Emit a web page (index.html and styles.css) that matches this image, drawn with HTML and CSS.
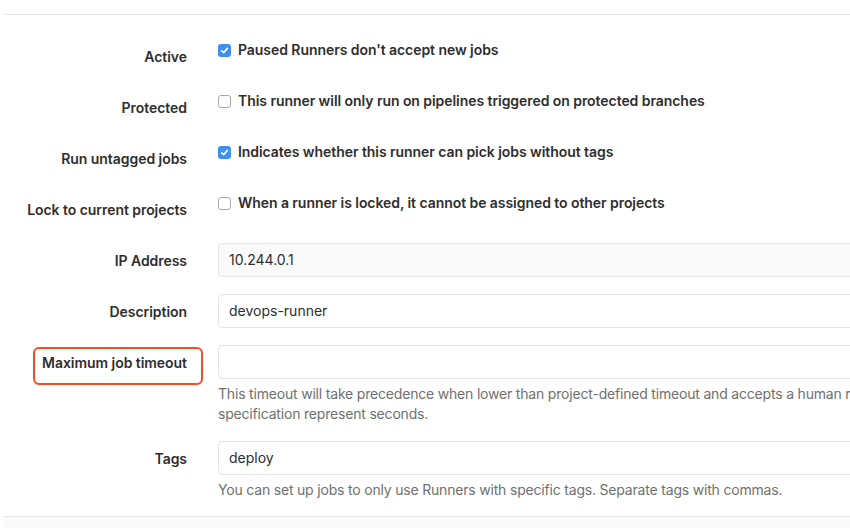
FILE: index.html
```html
<!DOCTYPE html>
<html>
<head>
<meta charset="utf-8">
<link rel="stylesheet" href="styles.css">
</head>
<body>
<div class="page">
  <hr class="divider">
  <form class="runner-form">
    <div class="form-row">
      <label class="row-label">Active</label>
      <div class="control check-control">
        <span class="checkbox checked"><svg viewBox="0 0 13 13" width="13" height="13"><path d="M3.6 6.8 L5.6 8.7 L9.4 4.4" fill="none" stroke="#fff" stroke-width="1.6" stroke-linecap="round" stroke-linejoin="round"/></svg></span>
        <span class="check-text">Paused Runners don't accept new jobs</span>
      </div>
    </div>
    <div class="form-row">
      <label class="row-label">Protected</label>
      <div class="control check-control">
        <span class="checkbox"></span>
        <span class="check-text">This runner will only run on pipelines triggered on protected branches</span>
      </div>
    </div>
    <div class="form-row">
      <label class="row-label">Run untagged jobs</label>
      <div class="control check-control">
        <span class="checkbox checked"><svg viewBox="0 0 13 13" width="13" height="13"><path d="M3.6 6.8 L5.6 8.7 L9.4 4.4" fill="none" stroke="#fff" stroke-width="1.6" stroke-linecap="round" stroke-linejoin="round"/></svg></span>
        <span class="check-text">Indicates whether this runner can pick jobs without tags</span>
      </div>
    </div>
    <div class="form-row">
      <label class="row-label">Lock to current projects</label>
      <div class="control check-control">
        <span class="checkbox"></span>
        <span class="check-text">When a runner is locked, it cannot be assigned to other projects</span>
      </div>
    </div>
    <div class="form-row">
      <label class="row-label">IP Address</label>
      <div class="control">
        <div class="text-input readonly">10.244.0.1</div>
      </div>
    </div>
    <div class="form-row">
      <label class="row-label">Description</label>
      <div class="control">
        <div class="text-input">devops-runner</div>
      </div>
    </div>
    <div class="form-row">
      <label class="row-label highlighted">Maximum job timeout<span class="annotation"></span></label>
      <div class="control">
        <div class="text-input"></div>
        <p class="help">This timeout will take precedence when lower than project-defined timeout and accepts a human readable time input language like "1 hour". Values without<br>specification represent seconds.</p>
      </div>
    </div>
    <div class="form-row">
      <label class="row-label">Tags</label>
      <div class="control">
        <div class="text-input">deploy</div>
        <p class="help">You can set up jobs to only use Runners with specific tags. Separate tags with commas.</p>
      </div>
    </div>
  </form>
  <div class="form-actions"></div>
</div>
</body>
</html>
```
FILE: styles.css
```css
html, body {
  margin: 0;
  padding: 0;
  background: #fff;
  overflow: hidden;
}
body {
  font-family: Inter, "Noto Sans", "Liberation Sans", sans-serif;
  font-size: 14px;
  color: #2e2e2e;
}
.page {
  width: 1300px;
  height: 528px;
  display: flex;
  flex-direction: column;
}
.divider {
  margin: 14px 0 0 5px;
  border: 0;
  border-top: 1px solid #e5e5e5;
  height: 0;
}
.runner-form {
  margin-top: 24px;
  display: flex;
  flex-direction: column;
}
.form-row {
  display: grid;
  grid-template-columns: 187px 1fr;
  column-gap: 31px;
  min-height: 34px;
  margin-bottom: 17px;
}
.form-row:last-child {
  margin-bottom: 16px;
}
.row-label {
  text-align: right;
  font-weight: 600;
  line-height: 20px;
  padding-top: 8px;
  position: relative;
  white-space: nowrap;
  letter-spacing: -0.05px;
}
.annotation {
  position: absolute;
  left: 33px;
  top: 2px;
  width: 166px;
  height: 34px;
  border: 2px solid #fc4a26;
  border-radius: 6px;
}
.control {
  width: 1000px;
}
.check-control {
  display: flex;
  align-items: flex-start;
  padding-top: 1px;
}
.checkbox {
  width: 13px;
  height: 13px;
  box-sizing: border-box;
  border: 1px solid #a8a8a8;
  border-radius: 3px;
  margin-top: 4px;
  margin-right: 7px;
  background: #fff;
  display: flex;
  flex: none;
}
.checkbox.checked {
  border: 0;
  background: #3d8ff2;
}
.check-text {
  font-weight: 600;
  line-height: 20px;
  letter-spacing: -0.06px;
}
.text-input {
  box-sizing: border-box;
  height: 34px;
  border: 1px solid #e5e5e5;
  border-radius: 4px;
  padding: 0 10px;
  line-height: 32px;
  background: #fff;
  color: #2e2e2e;
}
.text-input.readonly {
  background: #fafafa;
}
.help {
  margin: 5px 0 0;
  line-height: 20px;
  color: #707070;
  white-space: nowrap;
  letter-spacing: -0.19px;
}
.form-actions {
  flex: 1;
  margin-left: 4px;
  border-top: 1px solid #e5e5e5;
  background: #fafafa;
}
```
